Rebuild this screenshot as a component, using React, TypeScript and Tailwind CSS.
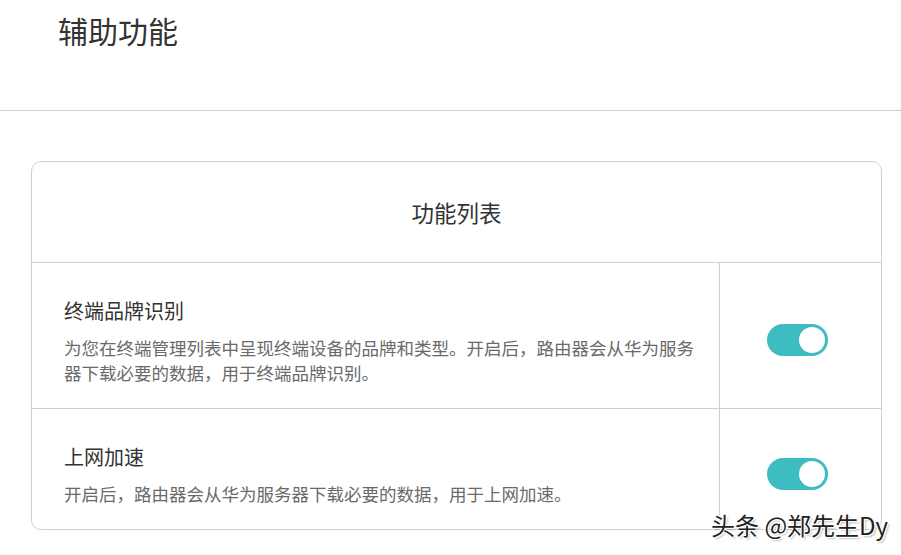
const font = { fontFamily: '"Noto Sans CJK SC", "Noto Sans", sans-serif' };

function Toggle() {
  return (
    <div className="w-[61px] h-[32px] rounded-full bg-[#3dbdc1] p-[3px] flex justify-end">
      <div className="w-[26px] h-[26px] rounded-full bg-white" />
    </div>
  );
}

function Row({ title, desc, last }: { title: string; desc: string; last?: boolean }) {
  return (
    <div className={`flex ${last ? '' : 'border-b border-[#cfcfcf]'}`}>
      <div className="w-[688px] border-r border-[#cfcfcf] pl-[32px] pr-[24px] pt-[34px] pb-[23px]">
        <div className="text-[20px] leading-[28px] text-[#333]">{title}</div>
        <div className="mt-[10px] w-[632px] text-[17.5px] leading-[25px] text-[#6a6a6a]">{desc}</div>
      </div>
      <div className="flex-1 flex items-center justify-center pt-[9px] pr-[6px]">
        <Toggle />
      </div>
    </div>
  );
}

export default function App() {
  return (
    <div className="relative w-[901px] h-[555px] bg-white overflow-hidden" style={font}>
      <div className="h-[111px] border-b border-[#d0d0d0] pl-[58px] pt-[10px]">
        <h1 className="text-[30px] leading-[40px] text-[#333]">辅助功能</h1>
      </div>

      <div className="mt-[50px] ml-[31px] w-[851px] border border-[#cfcfcf] rounded-[10px]">
        <div className="h-[101px] border-b border-[#cfcfcf] flex items-center justify-center">
          <span className="text-[22.5px] text-[#333] pt-[1px]">功能列表</span>
        </div>
        <Row
          title="终端品牌识别"
          desc="为您在终端管理列表中呈现终端设备的品牌和类型。开启后，路由器会从华为服务器下载必要的数据，用于终端品牌识别。"
        />
        <Row
          title="上网加速"
          desc="开启后，路由器会从华为服务器下载必要的数据，用于上网加速。"
          last
        />
      </div>

      <div
        className="absolute left-[711px] top-[508px] text-[24px] leading-[34px] text-[#222] whitespace-nowrap"
        style={{ textShadow: '1px 1px 0 #fff, -1px -1px 0 #fff, 1px -1px 0 #fff, -1px 1px 0 #fff, 2px 2px 2px rgba(0,0,0,0.25)' }}
      >
        头条 @郑先生Dy
      </div>
    </div>
  );
}
